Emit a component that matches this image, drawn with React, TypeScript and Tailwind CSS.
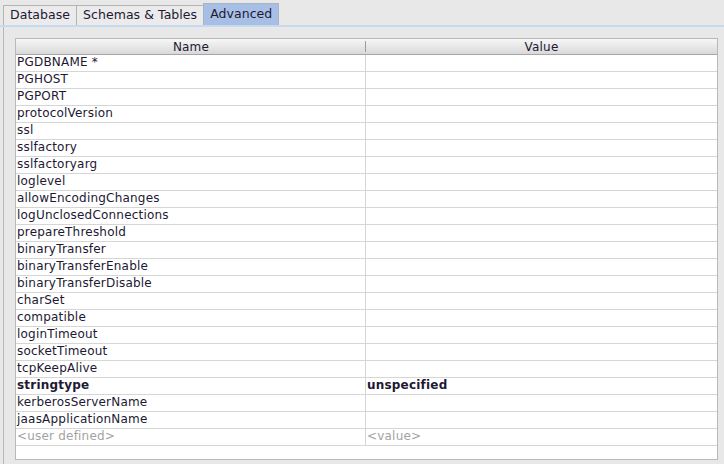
import React from "react";

const rows: { name: string; value?: string; bold?: boolean; hint?: boolean }[] = [
  { name: "PGDBNAME *" },
  { name: "PGHOST" },
  { name: "PGPORT" },
  { name: "protocolVersion" },
  { name: "ssl" },
  { name: "sslfactory" },
  { name: "sslfactoryarg" },
  { name: "loglevel" },
  { name: "allowEncodingChanges" },
  { name: "logUnclosedConnections" },
  { name: "prepareThreshold" },
  { name: "binaryTransfer" },
  { name: "binaryTransferEnable" },
  { name: "binaryTransferDisable" },
  { name: "charSet" },
  { name: "compatible" },
  { name: "loginTimeout" },
  { name: "socketTimeout" },
  { name: "tcpKeepAlive" },
  { name: "stringtype", value: "unspecified", bold: true },
  { name: "kerberosServerName" },
  { name: "jaasApplicationName" },
  { name: "<user defined>", value: "<value>", hint: true },
];

const tabs = ["Database", "Schemas & Tables", "Advanced"];

export default function App() {
  return (
    <div className="w-[724px] h-[464px] overflow-hidden bg-[#e8e8e8] font-['DejaVu_Sans',sans-serif] text-[12px] tracking-[0.2px] text-[#221833] flex flex-col">
      <div className="flex items-end h-[25px] pl-[3px] pt-[2px] text-[12.5px] tracking-[0.05px]">
        {tabs.map((t) => {
          const active = t === "Advanced";
          return (
            <div
              key={t}
              className={
                active
                  ? "h-[22px] px-[6px] flex items-center border border-b-0 border-[#a9b4c4] bg-[#a8bfe5] leading-none"
                  : "h-[20px] px-[6px] flex items-center border border-b-0 border-r-0 border-[#b4b4b4] bg-[#ebebeb] leading-none"
              }
            >
              {t}
            </div>
          );
        })}
      </div>
      <div className="h-[2px] bg-[#c6d9ee]" />
      <div className="flex-1 ml-[3px] border-l border-[#b8b8b8] pl-[11px] pt-[11px] pr-[6px]">
        <div className="w-[703px] h-[422px] bg-white border border-[#b9b9b9] flex flex-col">
          <div className="flex h-[16px] border-b border-[#a6a6a6] bg-gradient-to-b from-[#f7f7f7] to-[#d9d9d9] leading-none">
            <div className="w-[350px] flex items-center justify-center relative">
              Name
              <span className="absolute right-0 top-[2px] bottom-[2px] w-px bg-[#9a9a9a]" />
            </div>
            <div className="flex-1 flex items-center justify-center">Value</div>
          </div>
          {rows.map((r) => (
            <div
              key={r.name}
              className={
                "flex h-[17px] border-b border-[#d6d6d6] leading-none " +
                (r.bold ? "font-bold " : "") +
                (r.hint ? "text-[#a3a3a3]" : "")
              }
            >
              <div className="w-[350px] border-r border-[#d6d6d6] pl-[1px] pb-[2px] flex items-center">
                {r.name}
              </div>
              <div className="flex-1 pl-[1px] pb-[2px] flex items-center">{r.value ?? ""}</div>
            </div>
          ))}
        </div>
      </div>
    </div>
  );
}
